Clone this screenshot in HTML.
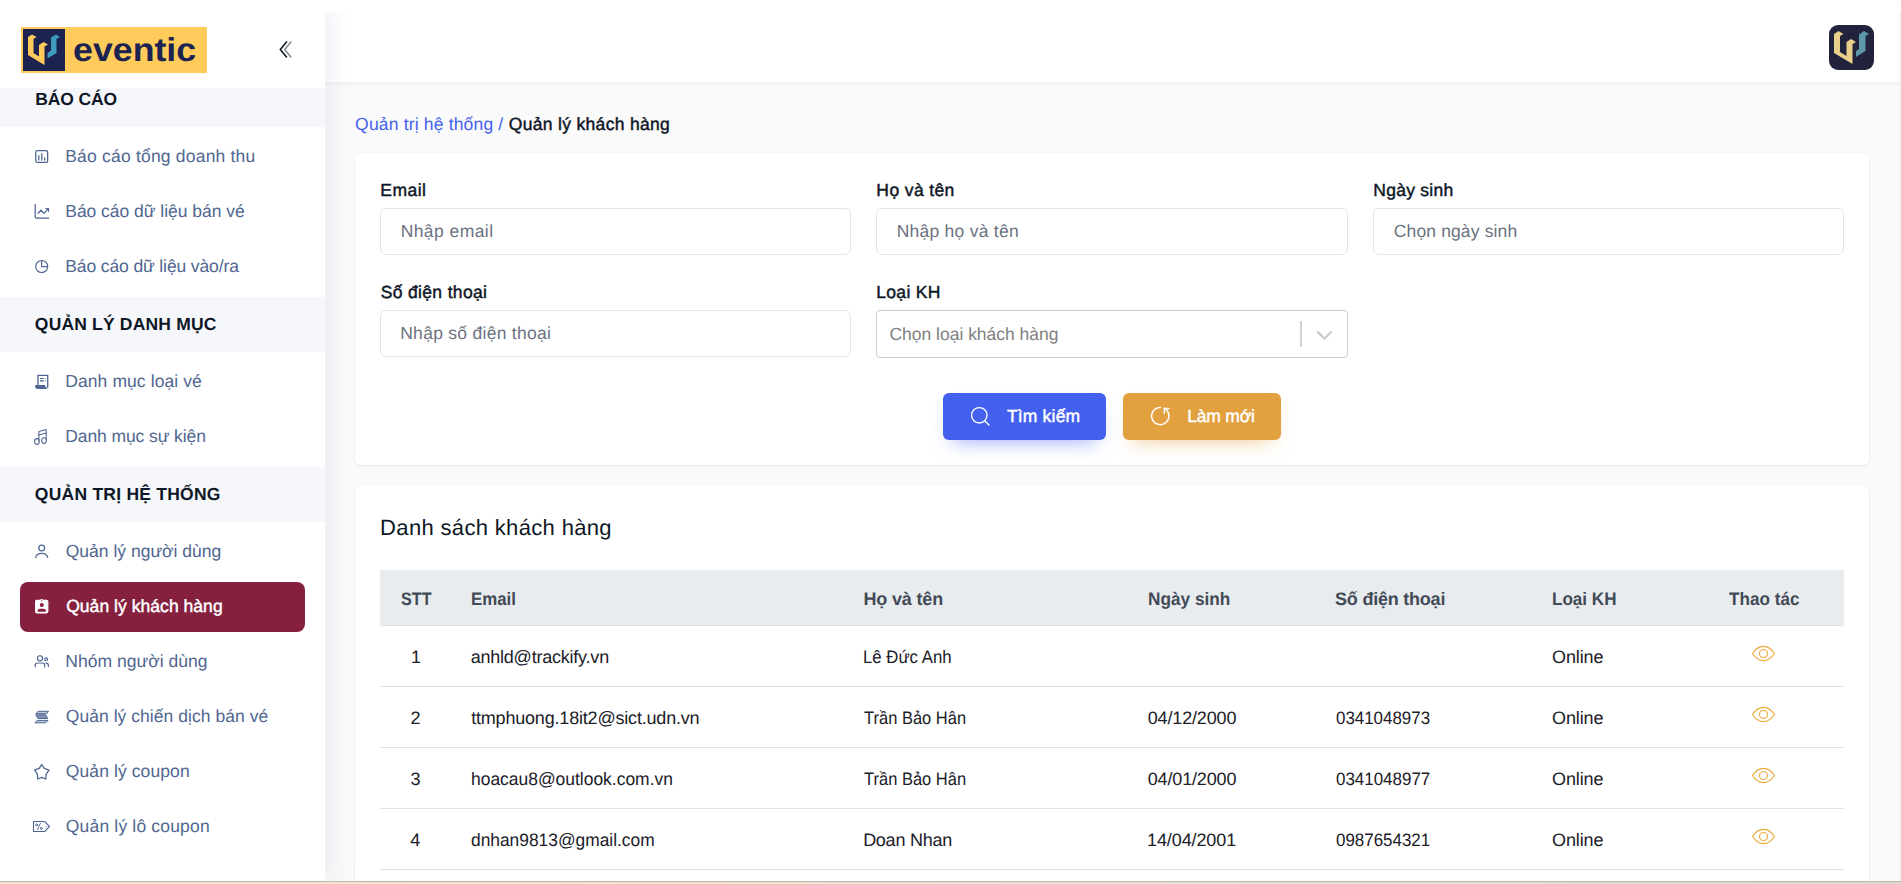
<!DOCTYPE html>
<html lang="vi">
<head>
<meta charset="utf-8">
<title>Quản lý khách hàng</title>
<style>
*{box-sizing:border-box;margin:0;padding:0}
html,body{width:1901px;height:884px;overflow:hidden}
body{position:relative;background:#fafafa;font-family:"Liberation Sans",sans-serif;color:#0e1726;text-rendering:geometricPrecision}
.abs{position:absolute}
.t{position:absolute;white-space:nowrap;line-height:20px}
#sidebar{position:absolute;left:0;top:0;width:325px;height:881px;background:#fff;box-shadow:5px 0 25px 0 rgba(94,92,154,.1)}
#topwhite{position:absolute;left:325px;top:0;width:1576px;height:12px;background:#fff}
#header{position:absolute;left:325px;top:12px;width:1574px;height:70px;background:#fff;box-shadow:0 1px 4px rgba(0,0,0,.06)}
.sec{position:absolute;left:0;width:325px;height:55px;background:#f6f7fb}
.act{position:absolute;left:20px;top:582px;width:285px;height:50px;border-radius:8px;background:#86203f}
.card{position:absolute;left:355px;width:1514px;background:#fff;border-radius:6px;box-shadow:0 1px 3px rgba(0,0,0,.08)}
.inp{position:absolute;width:471px;height:47px;border:1px solid #e0e6ed;border-radius:6px;background:#fff}
.btn{position:absolute;top:393px;height:47px;border-radius:6px}
#thead{position:absolute;left:380px;top:570px;width:1464px;height:56px;background:#e9ecef;border-bottom:1px solid #dee2e6}
.hr{position:absolute;left:380px;width:1464px;height:1px;background:#dee2e6}
.eye{position:absolute;left:1751px;width:25px;height:17px;overflow:visible}
</style>
</head>
<body>
<div id="header">
  <svg class="abs" style="left:1504px;top:13px" width="45" height="45" viewBox="0 0 45 45"><rect width="45" height="45" rx="9" fill="#20233b"/><path d="M5 9 L9.5 6 L14.5 9 L11 11 L11 27 L17.5 31 L17.5 17 L22 14 L27 17 L23.5 19 L23.5 39 L5 28 Z" fill="#e8cf8c"/><path d="M30 9.5 L35 6 L40 9 L36.5 11 L36.5 26 L27 32 L27 26 L30 24 Z" fill="#5e97aa"/></svg>
</div>

<div id="sidebar">
  <div class="abs" style="left:21px;top:27px;width:186px;height:46px;background:#ffcb5b"></div>
  <svg class="abs" style="left:23px;top:29px" width="42" height="42" viewBox="0 0 42 42"><rect width="42" height="42" fill="#1d2350"/><path d="M5 8 L9 5.5 L13.5 8 L10.5 10 L10.5 24 L16 27.5 L16 16 L20.5 13 L25 15.5 L21.5 17.5 L21.5 36 L5 26 Z" fill="#ffcb5b"/><path d="M28 8.5 L33 5.5 L37 8 L33.5 10 L33.5 24 L24.5 29.5 L24.5 24 L28 21.5 Z" fill="#3d9bbd"/></svg>
  <div class="t" id="logotxt" style="left:72.9px;top:30px;font-size:33px;line-height:40px;font-weight:700;color:#1d2350;transform-origin:0 50%;transform:scaleX(1.083)">eventic</div>
  <svg class="abs" style="left:276px;top:38px" width="20" height="24" viewBox="276 38 20 24" fill="none" stroke="#0e1726" stroke-width="1.600" stroke-linecap="round" stroke-linejoin="round"><path d="M286.500 41.900L280.300 49.400L286.500 56.900"/><path d="M290.900 41.900L284.700 49.400L290.900 56.900" stroke-width="1.500" opacity=".5"/></svg>

  <div class="sec" style="top:88px;height:39px"></div>
  <div class="sec" style="top:297px"></div>
  <div class="sec" style="top:467px"></div>
  <div class="act"></div>
  <svg class="abs" style="left:0;top:0" width="325" height="881" viewBox="0 0 325 881" fill="none" stroke="#4f6592" stroke-width="1.250" stroke-linecap="round" stroke-linejoin="round">
    <!-- bar chart -->
    <rect x="35.750" y="150.650" width="11.900" height="11.700" rx="1.600"/>
    <path d="M38.800 155.600V160M41.800 153.700V160M44.750 157.800V160"/>
    <!-- line chart -->
    <path d="M35.200 204.600V216.200Q35.200 218.200 37.200 218.200H48.600"/>
    <path d="M38 213.300L40.950 210.200L44.100 213.400L48.200 208.900"/>
    <path d="M45.900 208.600H48.500V211.300"/>
    <!-- pie -->
    <circle cx="41.700" cy="266.500" r="6" stroke-width="1.150"/>
    <path d="M41.600 260.600V266.600H47.600" stroke-width="1.150"/>
    <!-- receipt -->
    <path d="M38 385V375.400H47.700V387" stroke-width="1.300" stroke-linejoin="miter"/>
    <path d="M35.200 384.900H45.300V386.200Q45.300 387.600 46.600 387.600Q47.700 387.600 47.900 386.400V387Q47.700 389 45.800 389H37.700Q35.200 389 35.200 386.500Z" fill="#4f6592" stroke="none"/>
    <path d="M40 378.500H43.900M45.100 378.500H45.700" stroke-width="1" stroke-linecap="butt"/>
    <path d="M40 380.900H43.900M45.100 380.900H45.700" stroke-width="1.800" stroke-linecap="butt" opacity=".8"/>
    <!-- music -->
    <g stroke-width="1.050">
    <ellipse cx="36.900" cy="441.500" rx="2.350" ry="2.900"/>
    <ellipse cx="44" cy="440.600" rx="2.350" ry="2.900"/>
    <path d="M38.900 440.800V431.400L46.200 429.500V440"/>
    <path d="M39 434.900L46.200 433.100"/>
    </g>
    <!-- user -->
    <circle cx="41.700" cy="548" r="2.900"/>
    <path d="M35.700 557.500C36.100 554.800 38.400 553.300 41.700 553.300S47.300 554.800 47.700 557.500"/>
    <!-- badge (active) -->
    <g stroke="none" fill="#fff">
      <path d="M36.800 599.800H40.100Q40.500 598.900 41.650 598.900T43.200 599.800H46.600Q48.400 599.800 48.400 601.600V611.600Q48.400 613.400 46.600 613.400H36.800Q35 613.400 35 611.600V601.600Q35 599.800 36.800 599.800Z"/>
      <circle cx="41.650" cy="600.800" r=".6" fill="#86203f"/>
      <circle cx="41.800" cy="605" r="2" fill="#86203f"/>
      <path d="M37.500 611.800Q37.700 608.800 40 608.800H43.500Q45.900 608.800 46.100 611.800Z" fill="#86203f"/>
    </g>
    <!-- group -->
    <g stroke-width="1.200">
    <circle cx="40" cy="658.300" r="2.550"/>
    <path d="M35.200 666.700V665.200Q35.200 663 37.500 663H42.400Q44.700 663 44.700 665.200V666.900"/>
    <circle cx="46.100" cy="659.300" r="1.450"/>
    <path d="M46 663.100Q48.400 663.100 48.400 665.500V666.500"/>
    </g>
    <!-- stack -->
    <g stroke-width="1" fill="#4f6592" fill-opacity=".35">
    <path d="M38.400 711.300H48.600L46.500 713.700H36.300Z"/>
    <path d="M36.100 714.800H45.600L47.700 718.500H38.300Z" fill-opacity=".7"/>
    <path d="M37.400 720.400H48L45.700 722.800H35.400Z"/>
    </g>
    <!-- star -->
    <path d="M41.760 764.500L44.300 768.300L49 770.100L46.200 774.100L45.700 779L41.760 777.400L37.800 779L37.300 774.100L34.600 770.100L39.200 768.300Z" stroke-width="1.300"/>
    <!-- tag -->
    <g stroke-width="1.100">
    <path d="M33.500 821.500H44.750L49.500 826.500L44.750 831.500H33.500Z" stroke-linejoin="miter"/>
    <circle cx="36.600" cy="824.900" r="1" stroke-width=".9"/>
    <circle cx="41.300" cy="828.400" r="1" stroke-width=".9"/>
    <path d="M40.400 823.300L37.400 829.700" stroke-width=".9"/>
    <circle cx="46" cy="826.600" r=".35" stroke-width=".5" opacity=".6"/>
    </g>
  </svg>
</div>
<div id="topwhite"></div>

<div class="card" style="top:153px;height:312px"></div>
<div class="inp" style="left:380px;top:208px"></div>
<div class="inp" style="left:876px;top:208px;width:472px"></div>
<div class="inp" style="left:1373px;top:208px"></div>
<div class="inp" style="left:380px;top:310px"></div>
<div class="inp" style="left:876px;top:310px;width:472px;height:48px;border-color:#ccc;border-radius:4px">
  <div class="abs" style="left:423px;top:10px;width:2px;height:26px;background:#d2d2d2"></div>
  <svg class="abs" style="left:439px;top:17px" width="18" height="14" viewBox="0 0 18 14" fill="none" stroke="#ccc" stroke-width="2.400"><path d="M1.300 3.500L8.450 10.600L15.600 3.500"/></svg>
</div>

<div class="btn" style="left:943px;width:163px;background:#4361ee;box-shadow:0 10px 20px -10px rgba(67,97,238,.6)"></div>
<div class="btn" style="left:1123px;width:158px;background:#e2a03f;box-shadow:0 10px 20px -10px rgba(226,160,63,.6)"></div>

<svg class="abs" style="left:325px;top:380px" width="1576" height="60" viewBox="325 380 1576 60" fill="none" stroke="#fff" stroke-width="1.400" stroke-linecap="round" stroke-linejoin="round">
  <circle cx="979.300" cy="415.300" r="7.700"/><path d="M984.900 420.900L989 425"/>
  <path d="M1160.500 407.400A8.600 8.600 0 1 0 1164.300 408.400" stroke-width="1.500"/><path d="M1168.900 408.400H1164.300V413.400" stroke-width="1.500" stroke-linejoin="miter"/>
</svg>
<div class="card" style="top:485px;height:420px"></div>
<div id="thead"></div>
<div class="hr" style="top:686px"></div>
<div class="hr" style="top:747px"></div>
<div class="hr" style="top:808px"></div>
<div class="hr" style="top:869px"></div>
<svg class="eye" style="top:645px" viewBox="0 0 25 17" fill="none" stroke="#eba93d" stroke-width="1.150" stroke-linejoin="round"><path d="M1.500 8.500C4.500 4 8 1.400 12.500 1.400S20.500 4 23.500 8.500C20.500 13 17 15.600 12.500 15.600S4.500 13 1.500 8.500z"/><circle cx="12.500" cy="8.500" r="4"/></svg>
<svg class="eye" style="top:706px" viewBox="0 0 25 17" fill="none" stroke="#eba93d" stroke-width="1.150" stroke-linejoin="round"><path d="M1.500 8.500C4.500 4 8 1.400 12.500 1.400S20.500 4 23.500 8.500C20.500 13 17 15.600 12.500 15.600S4.500 13 1.500 8.500z"/><circle cx="12.500" cy="8.500" r="4"/></svg>
<svg class="eye" style="top:767px" viewBox="0 0 25 17" fill="none" stroke="#eba93d" stroke-width="1.150" stroke-linejoin="round"><path d="M1.500 8.500C4.500 4 8 1.400 12.500 1.400S20.500 4 23.500 8.500C20.500 13 17 15.600 12.500 15.600S4.500 13 1.500 8.500z"/><circle cx="12.500" cy="8.500" r="4"/></svg>
<svg class="eye" style="top:828px" viewBox="0 0 25 17" fill="none" stroke="#eba93d" stroke-width="1.150" stroke-linejoin="round"><path d="M1.500 8.500C4.500 4 8 1.400 12.500 1.400S20.500 4 23.500 8.500C20.500 13 17 15.600 12.500 15.600S4.500 13 1.500 8.500z"/><circle cx="12.500" cy="8.500" r="4"/></svg>
<div class="t" id="s1" style="left:65.24px;top:146px;font-size:17.5px;color:#506690;letter-spacing:0.200px">Báo cáo tổng doanh thu</div>
<div class="t" id="s2" style="left:65.24px;top:201px;font-size:17.5px;color:#506690;letter-spacing:-0.030px">Báo cáo dữ liệu bán vé</div>
<div class="t" id="s3" style="left:65.24px;top:256px;font-size:17.5px;color:#506690;letter-spacing:-0.116px">Báo cáo dữ liệu vào/ra</div>
<div class="t" id="s4" style="left:65.24px;top:371px;font-size:17.5px;color:#506690;letter-spacing:0.090px">Danh mục loại vé</div>
<div class="t" id="s5" style="left:65.24px;top:426px;font-size:17.5px;color:#506690;letter-spacing:-0.092px">Danh mục sự kiện</div>
<div class="t" id="s6" style="left:65.76px;top:541px;font-size:17.5px;color:#506690;letter-spacing:0.002px">Quản lý người dùng</div>
<div class="t" id="s7" style="left:66.19px;top:596px;font-size:17.5px;color:#ffffff;letter-spacing:0.046px;-webkit-text-stroke:.45px currentColor">Quản lý khách hàng</div>
<div class="t" id="s8" style="left:65.24px;top:651px;font-size:17.5px;color:#506690;letter-spacing:0.026px">Nhóm người dùng</div>
<div class="t" id="s9" style="left:65.76px;top:706px;font-size:17.5px;color:#506690;letter-spacing:0.047px">Quản lý chiến dịch bán vé</div>
<div class="t" id="s10" style="left:65.79px;top:761px;font-size:17.5px;color:#506690;letter-spacing:0.098px">Quản lý coupon</div>
<div class="t" id="s11" style="left:65.79px;top:816px;font-size:17.5px;color:#506690;letter-spacing:0.173px">Quản lý lô coupon</div>
<div class="t" id="h1" style="left:35.20px;top:89px;font-size:17.5px;color:#0e1726;letter-spacing:-0.100px;font-weight:700">BÁO CÁO</div>
<div class="t" id="h2" style="left:34.85px;top:314px;font-size:17.5px;color:#0e1726;letter-spacing:0.177px;font-weight:700">QUẢN LÝ DANH MỤC</div>
<div class="t" id="h3" style="left:34.85px;top:484px;font-size:17.5px;color:#0e1726;letter-spacing:0.238px;font-weight:700">QUẢN TRỊ HỆ THỐNG</div>
<div class="t" id="bc1" style="left:355.11px;top:114px;font-size:17.5px;color:#4361ee;letter-spacing:0.176px">Quản trị hệ thống /</div>
<div class="t" id="bc2" style="left:508.84px;top:114px;font-size:17.5px;color:#0e1726;letter-spacing:0.312px;-webkit-text-stroke:.45px currentColor">Quản lý khách hàng</div>
<div class="t" id="l1" style="left:380.37px;top:180px;font-size:17.5px;color:#0e1726;letter-spacing:0.466px;-webkit-text-stroke:.45px currentColor">Email</div>
<div class="t" id="l2" style="left:876.37px;top:180px;font-size:17.5px;color:#0e1726;letter-spacing:0.384px;-webkit-text-stroke:.45px currentColor">Họ và tên</div>
<div class="t" id="l3" style="left:1373.25px;top:180px;font-size:17.5px;color:#0e1726;letter-spacing:0.263px;-webkit-text-stroke:.45px currentColor">Ngày sinh</div>
<div class="t" id="l4" style="left:380.67px;top:282px;font-size:17.5px;color:#0e1726;letter-spacing:0.347px;-webkit-text-stroke:.45px currentColor">Số điện thoại</div>
<div class="t" id="l5" style="left:876.37px;top:282px;font-size:17.5px;color:#0e1726;letter-spacing:0.275px;-webkit-text-stroke:.45px currentColor">Loại KH</div>
<div class="t" id="p1" style="left:400.65px;top:221px;font-size:17.5px;color:#6b7280;letter-spacing:0.429px">Nhập email</div>
<div class="t" id="p2" style="left:896.65px;top:221px;font-size:17.5px;color:#6b7280;letter-spacing:0.253px">Nhập họ và tên</div>
<div class="t" id="p3" style="left:1393.75px;top:221px;font-size:17.5px;color:#6b7280;letter-spacing:0.137px">Chọn ngày sinh</div>
<div class="t" id="p4" style="left:400.21px;top:323px;font-size:17.5px;color:#6b7280;letter-spacing:0.283px">Nhập số điện thoại</div>
<div class="t" id="p5" style="left:889.50px;top:324px;font-size:17.5px;color:#808080;letter-spacing:-0.017px">Chọn loại khách hàng</div>
<div class="t" id="b1" style="left:1006.88px;top:406px;font-size:17.5px;color:#ffffff;letter-spacing:0.187px;-webkit-text-stroke:.45px currentColor">Tìm kiếm</div>
<div class="t" id="b2" style="left:1187.16px;top:406px;font-size:17.5px;color:#ffffff;letter-spacing:-0.183px;-webkit-text-stroke:.45px currentColor">Làm mới</div>
<div class="t" id="ttl" style="left:380.10px;top:514px;font-size:22px;color:#0e1726;letter-spacing:0.339px;line-height:28px">Danh sách khách hàng</div>
<div class="t" id="th1" style="left:400.66px;top:589px;font-size:18px;color:#424a56;transform-origin:0 50%;transform:scaleX(0.8976);font-weight:700">STT</div>
<div class="t" id="th2" style="left:470.88px;top:589px;font-size:18px;color:#424a56;transform-origin:0 50%;transform:scaleX(0.9366);font-weight:700">Email</div>
<div class="t" id="th3" style="left:863.52px;top:589px;font-size:18px;color:#424a56;letter-spacing:-0.172px;font-weight:700">Họ và tên</div>
<div class="t" id="th4" style="left:1147.65px;top:589px;font-size:18px;color:#424a56;transform-origin:0 50%;transform:scaleX(0.9566);font-weight:700">Ngày sinh</div>
<div class="t" id="th5" style="left:1335.07px;top:589px;font-size:18px;color:#424a56;letter-spacing:-0.223px;font-weight:700">Số điện thoại</div>
<div class="t" id="th6" style="left:1552.23px;top:589px;font-size:18px;color:#424a56;transform-origin:0 50%;transform:scaleX(0.9483);font-weight:700">Loại KH</div>
<div class="t" id="th7" style="left:1729.04px;top:589px;font-size:18px;color:#424a56;transform-origin:0 50%;transform:scaleX(0.9516);font-weight:700">Thao tác</div>
<div class="t" id="r1c1" style="left:411.10px;top:647px;font-size:18px;color:#1b2028;letter-spacing:0.000px">1</div>
<div class="t" id="r1c2" style="left:470.63px;top:647px;font-size:18px;color:#1b2028;letter-spacing:-0.217px">anhld@trackify.vn</div>
<div class="t" id="r1c3" style="left:863.46px;top:647px;font-size:18px;color:#1b2028;transform-origin:0 50%;transform:scaleX(0.9308)">Lê Đức Anh</div>
<div class="t" id="r1c6" style="left:1552.11px;top:647px;font-size:18px;color:#1b2028;letter-spacing:-0.131px">Online</div>
<div class="t" id="r2c1" style="left:410.50px;top:708px;font-size:18px;color:#1b2028;letter-spacing:0.000px">2</div>
<div class="t" id="r2c2" style="left:471.17px;top:708px;font-size:18px;color:#1b2028;letter-spacing:-0.190px">ttmphuong.18it2@sict.udn.vn</div>
<div class="t" id="r2c3" style="left:864.36px;top:708px;font-size:18px;color:#1b2028;transform-origin:0 50%;transform:scaleX(0.9163)">Trần Bảo Hân</div>
<div class="t" id="r2c4" style="left:1147.70px;top:708px;font-size:18px;color:#1b2028;letter-spacing:-0.148px">04/12/2000</div>
<div class="t" id="r2c5" style="left:1335.63px;top:708px;font-size:18px;color:#1b2028;transform-origin:0 50%;transform:scaleX(0.9395)">0341048973</div>
<div class="t" id="r2c6" style="left:1552.11px;top:708px;font-size:18px;color:#1b2028;letter-spacing:-0.131px">Online</div>
<div class="t" id="r3c1" style="left:410.49px;top:769px;font-size:18px;color:#1b2028;letter-spacing:0.000px">3</div>
<div class="t" id="r3c2" style="left:470.54px;top:769px;font-size:18px;color:#1b2028;transform-origin:0 50%;transform:scaleX(0.9688)">hoacau8@outlook.com.vn</div>
<div class="t" id="r3c3" style="left:864.36px;top:769px;font-size:18px;color:#1b2028;transform-origin:0 50%;transform:scaleX(0.9163)">Trần Bảo Hân</div>
<div class="t" id="r3c4" style="left:1147.70px;top:769px;font-size:18px;color:#1b2028;letter-spacing:-0.148px">04/01/2000</div>
<div class="t" id="r3c5" style="left:1335.62px;top:769px;font-size:18px;color:#1b2028;transform-origin:0 50%;transform:scaleX(0.9412)">0341048977</div>
<div class="t" id="r3c6" style="left:1552.11px;top:769px;font-size:18px;color:#1b2028;letter-spacing:-0.131px">Online</div>
<div class="t" id="r4c1" style="left:410.13px;top:830px;font-size:18px;color:#1b2028;letter-spacing:0.000px">4</div>
<div class="t" id="r4c2" style="left:470.91px;top:830px;font-size:18px;color:#1b2028;transform-origin:0 50%;transform:scaleX(0.9644)">dnhan9813@gmail.com</div>
<div class="t" id="r4c3" style="left:863.13px;top:830px;font-size:18px;color:#1b2028;letter-spacing:-0.255px">Doan Nhan</div>
<div class="t" id="r4c4" style="left:1146.97px;top:830px;font-size:18px;color:#1b2028;letter-spacing:-0.093px">14/04/2001</div>
<div class="t" id="r4c5" style="left:1335.62px;top:830px;font-size:18px;color:#1b2028;transform-origin:0 50%;transform:scaleX(0.9410)">0987654321</div>
<div class="t" id="r4c6" style="left:1552.11px;top:830px;font-size:18px;color:#1b2028;letter-spacing:-0.131px">Online</div>
<div class="abs" style="left:1899px;top:12px;width:2px;height:869px;background:#f4f4f5"></div>
<div class="abs" style="left:0;top:881px;width:1901px;height:3px;background:linear-gradient(90deg,#f5e6d0 0%,#efe3d2 40%,#dcd9d3 100%)"></div>
<div class="abs" style="left:0;top:881px;width:1901px;height:1px;background:#bdb6aa"></div>
</body>
</html>
